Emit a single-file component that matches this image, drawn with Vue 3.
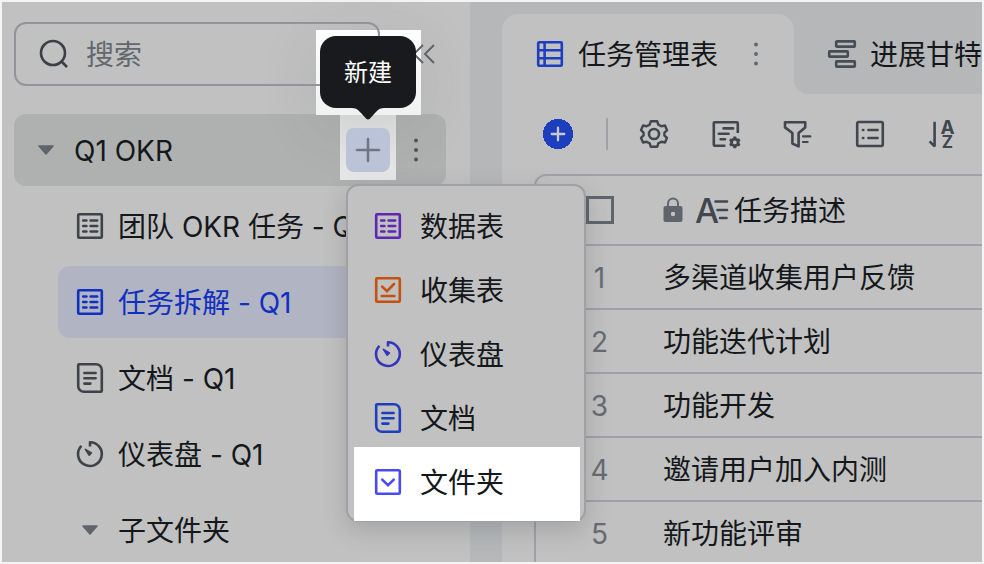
<script setup>
import { ref } from 'vue';

const keyword = ref('');
const activeNode = ref('tasks');
const menuOpen = ref(true);

const nodes = [
  { id: 'okr', icon: 'icon-table', label: '团队 OKR 任务 - Q1' },
  { id: 'tasks', icon: 'icon-table', label: '任务拆解 - Q1' },
  { id: 'doc', icon: 'icon-doc', label: '文档 - Q1' },
  { id: 'dashboard', icon: 'icon-dashboard', label: '仪表盘 - Q1' },
  { id: 'folder', icon: 'icon-caret', label: '子文件夹' },
];

const menuItems = [
  { icon: 'icon-table', label: '数据表', tone: 'purple' },
  { icon: 'icon-form', label: '收集表', tone: 'orange' },
  { icon: 'icon-dashboard', label: '仪表盘', tone: 'indigo' },
  { icon: 'icon-doc', label: '文档', tone: 'blue' },
  { icon: 'icon-folder', label: '文件夹', tone: 'bright', spotlight: true },
];

const tools = [
  { icon: 'icon-gear', label: '设置' },
  { icon: 'icon-fields', label: '字段配置' },
  { icon: 'icon-filter', label: '筛选' },
  { icon: 'icon-group', label: '分组' },
  { icon: 'icon-sort', label: '排序' },
];

const rows = [
  '多渠道收集用户反馈',
  '功能迭代计划',
  '功能开发',
  '邀请用户加入内测',
  '新功能评审',
];
</script>

<template>
  <div class="app">
    <svg class="sprite" aria-hidden="true">
      <symbol id="icon-search" viewBox="0 0 28 28">
        <circle cx="13" cy="13" r="12" />
        <path d="M21.5 21.5L27 27" />
      </symbol>
      <symbol id="icon-collapse" viewBox="0 0 28 28">
        <path d="M14 5L5 14l9 9M25 5l-9 9 9 9" stroke-width="2" />
      </symbol>
      <symbol id="icon-caret" viewBox="0 0 28 28">
        <path d="M7 10h14l-7 8z" fill="#5f656d" stroke="#5f656d" stroke-width="1.6" stroke-linejoin="round" />
      </symbol>
      <symbol id="icon-more" viewBox="0 0 28 28">
        <g fill="currentColor" stroke="none">
          <circle cx="14" cy="4.4" r="2" />
          <circle cx="14" cy="14" r="2" />
          <circle cx="14" cy="23.6" r="2" />
        </g>
      </symbol>
      <symbol id="icon-plus" viewBox="0 0 28 28">
        <path d="M14 3v22M3 14h22" stroke-linecap="round" />
      </symbol>
      <symbol id="icon-table" viewBox="0 0 28 28">
        <rect x="2.2" y="2.2" width="23.6" height="23.6" rx="1" />
        <path d="M7.2 8.5h3.2M14.6 8.5h6.6M7.2 14h3.2M14.6 14h6.6M7.2 19.5h3.2M14.6 19.5h6.6" stroke-linecap="round" />
      </symbol>
      <symbol id="icon-doc" viewBox="0 0 28 28">
        <path d="M3.2 .2H20a5.8 5.8 0 0 1 5.8 5.8v20.8a1 1 0 0 1-1 1H8a5.8 5.8 0 0 1-5.8-5.8V1.2a1 1 0 0 1 1-1z" />
        <path d="M8.4 9h11.2M8.4 14.3h11.2M8.4 19.6h6" stroke-linecap="round" />
      </symbol>
      <symbol id="icon-dashboard" viewBox="0 0 28 28">
        <path d="M14 6.6V2.2A11.9 11.9 0 1 1 5.4 5.8" stroke-linejoin="round" />
        <path d="M9.4 9.4l6 3.6-2.2 2.2z" fill="currentColor" stroke-width="1.6" stroke-linejoin="round" />
      </symbol>
      <symbol id="icon-form" viewBox="0 0 28 28">
        <rect x="2.2" y="2.2" width="23.6" height="23.6" rx="1" />
        <path d="M8.2 10.6l4.8 4.6 7-7.2M7.8 20h12.6" stroke-linecap="round" />
      </symbol>
      <symbol id="icon-folder" viewBox="0 0 28 28">
        <rect x="2.2" y="2.2" width="23.6" height="23.6" rx="1" />
        <path d="M8.2 11.6l5.8 5.6 5.8-5.6" stroke-linecap="round" />
      </symbol>
      <symbol id="icon-grid" viewBox="0 0 28 28">
        <rect x="2.2" y="2.2" width="23.6" height="23.6" rx="1" />
        <path d="M8.6 2v24M2 10.2h24M2 18.2h24" />
      </symbol>
      <symbol id="icon-gantt" viewBox="0 0 28 28">
        <rect x="8.2" y="1.4" width="18.6" height="5.2" rx=".5" />
        <rect x="1.2" y="11.4" width="18.6" height="5.2" rx=".5" />
        <rect x="8.2" y="21.4" width="18.6" height="5.2" rx=".5" />
      </symbol>
      <symbol id="icon-gear" viewBox="0 0 28 28">
        <path d="M10.8 1.2H17.2L18.3 4.6 21.4 6.2 25 5.5 27 10.3 24.4 12.7V15.5L27 17.8 25 22.5 21.4 21.8 18.3 23.4 17.2 26.8H10.8L9.7 23.4 6.6 21.8 3 22.5 1 17.8 3.6 15.3V12.7L1 10.2 3 5.5 6.6 6.2 9.7 4.6z" stroke-linejoin="round" stroke-width="2.4" />
        <circle cx="14" cy="14" r="5" />
      </symbol>
      <symbol id="icon-fields" viewBox="0 0 28 28">
        <path d="M25.8 13V3.2a1 1 0 0 0-1-1H2.8a1 1 0 0 0-1 1v21.6a1 1 0 0 0 1 1H13.4" />
        <path d="M11.5 8.4h9.6M6.8 13.8h9.8M8.6 19.2h4.4" stroke-linecap="round" />
        <circle cx="22.8" cy="22.4" r="3.3" stroke-width="2.8" />
        <path d="M22.8 16.6v2.2M22.8 26v2.2M17.8 19.5l1.9 1.1M25.9 24.2l1.9 1.1M17.8 25.3l1.9-1.1M25.900 20.6l1.9-1.1" stroke-width="3" />
      </symbol>
      <symbol id="icon-filter" viewBox="0 0 28 28">
        <path d="M1 2.2H21.2V7.4L14.6 13V26.4L8.4 23.6V13L1 7.4z" stroke-linejoin="round" />
        <path d="M19 16.4h7.4M19 22h4.6" stroke-linecap="round" stroke-width="2.2" />
      </symbol>
      <symbol id="icon-group" viewBox="0 0 28 28">
        <rect x="1.2" y="2" width="25.6" height="24" rx="1.4" />
        <path d="M12.4 10h9.2M12.4 18h9.2M6.9 10h.4M6.9 18h.4" stroke-linecap="round" />
      </symbol>
      <symbol id="icon-sort" viewBox="0 0 28 28">
        <path d="M6.6 1.8V26.4L1.6 21.4" stroke-linejoin="bevel" />
        <text class="sprite__letter" x="19.5" y="13.5" font-size="19">A</text>
        <text class="sprite__letter" x="19.5" y="28" font-size="17">Z</text>
      </symbol>
      <symbol id="icon-lock" viewBox="0 0 20 28">
        <rect x=".5" y="10" width="19" height="16" rx="2" fill="currentColor" stroke="none" />
        <path d="M5 11V7.6a5 5 0 0 1 10 0V11" stroke-width="2" />
        <circle cx="10" cy="18" r="2.2" fill="#c1c1c1" stroke="none" />
      </symbol>
      <symbol id="icon-text" viewBox="0 0 32 28">
        <text class="sprite__thin" x="11" y="26.5" font-size="34">A</text>
        <path d="M19.5 5.5H31M21.5 14H31M24 22h6.5" stroke-linecap="round" />
      </symbol>
    </svg>

    <aside class="sidebar">
      <div class="sidebar__header">
        <label class="search">
          <svg class="icon search__icon"><use href="#icon-search" /></svg>
          <input v-model="keyword" class="search__input" type="text" placeholder="搜索" aria-label="搜索" />
        </label>
        <button class="collapse" type="button" aria-label="收起">
          <svg class="icon"><use href="#icon-collapse" /></svg>
        </button>
      </div>

      <nav class="tree">
        <div class="tree__root">
          <svg class="icon"><use href="#icon-caret" /></svg>
          <span class="tree__title">Q1 OKR</span>
          <div class="create">
            <button class="create__button" type="button" aria-label="新建" @click="menuOpen = !menuOpen">
              <svg class="icon"><use href="#icon-plus" /></svg>
            </button>
            <div class="tooltip" role="tooltip">
              新建
              <svg class="tooltip__arrow" viewBox="0 0 32 12">
                <path d="M0 0h32c-5 0-7 3-9 5l-5 5.400q-2 2-4 0L9 5C7 3 5 0 0 0z" />
              </svg>
            </div>
            <ul v-if="menuOpen" class="menu">
              <li v-for="item in menuItems" :key="item.label">
                <button
                  class="menu__item"
                  :class="['menu__item--' + item.tone, { 'menu__item--spotlight': item.spotlight }]"
                  type="button"
                >
                  <svg class="icon"><use :href="'#' + item.icon" /></svg>
                  <span class="menu__label">{{ item.label }}</span>
                </button>
              </li>
            </ul>
          </div>
          <button class="more" type="button" aria-label="更多">
            <svg class="icon"><use href="#icon-more" /></svg>
          </button>
        </div>

        <a
          v-for="node in nodes"
          :key="node.id"
          class="tree__node"
          :class="{ 'tree__node--active': node.id === activeNode }"
          href="#"
          @click.prevent="activeNode = node.id"
        >
          <svg class="icon"><use :href="'#' + node.icon" /></svg>
          <span class="tree__label">{{ node.label }}</span>
        </a>
      </nav>
    </aside>

    <main class="main">
      <div class="tabs">
        <div class="tab tab--active">
          <svg class="icon"><use href="#icon-grid" /></svg>
          <span class="tab__label">任务管理表</span>
          <button class="more tab__more" type="button" aria-label="更多">
            <svg class="icon"><use href="#icon-more" /></svg>
          </button>
        </div>
        <div class="tab">
          <svg class="icon"><use href="#icon-gantt" /></svg>
          <span class="tab__label">进展甘特图</span>
        </div>
      </div>

      <section class="panel">
        <div class="toolbar">
          <button class="toolbar__add" type="button" aria-label="添加记录">
            <svg class="icon"><use href="#icon-plus" /></svg>
          </button>
          <span class="toolbar__divider"></span>
          <div class="toolbar__tools">
            <button v-for="tool in tools" :key="tool.icon" class="toolbar__tool" type="button" :aria-label="tool.label">
              <svg class="icon"><use :href="'#' + tool.icon" /></svg>
            </button>
          </div>
        </div>

        <div class="sheet">
          <table class="table">
            <thead>
              <tr>
                <th class="table__index"><input class="checkbox" type="checkbox" aria-label="全选" /></th>
                <th>
                  <div class="field">
                    <svg class="field__lock"><use href="#icon-lock" /></svg>
                    <svg class="field__type"><use href="#icon-text" /></svg>
                    <span class="field__name">任务描述</span>
                  </div>
                </th>
              </tr>
            </thead>
            <tbody>
              <tr v-for="(row, index) in rows" :key="row">
                <td class="table__index">{{ index + 1 }}</td>
                <td>{{ row }}</td>
              </tr>
            </tbody>
          </table>
        </div>
      </section>
    </main>
  </div>
</template>

<style>
body {
  margin: 0;
  background-color: #f4f4f4;
}
</style>

<style scoped>
.app {
  display: flex;
  box-sizing: border-box;
  height: 100vh;
  padding: 2px;
  overflow: hidden;
  background-color: #b5b7b9;
  background-clip: content-box;
  font-family: Inter, "Noto Sans CJK SC", sans-serif;
  font-size: 28px;
  line-height: 40px;
  color: #15181b;
}

button {
  display: flex;
  align-items: center;
  justify-content: center;
  padding: 0;
  border: 0;
  background: none;
  font: inherit;
  color: inherit;
}

.sprite {
  display: none;
}

.sprite__letter {
  font-family: Inter, sans-serif;
  font-weight: 700;
  text-anchor: middle;
  fill: currentColor;
  stroke: none;
}

.sprite__thin {
  font-family: Inter, sans-serif;
  font-weight: 500;
  text-anchor: middle;
  fill: currentColor;
  stroke: none;
}

svg,
symbol {
  overflow: visible;
}

svg {
  fill: none;
  stroke: currentColor;
  stroke-width: 2.6;
}

.icon {
  flex: none;
  width: 28px;
  height: 28px;
}

.tree__title,
.tree__label,
.menu__label,
.tab__label,
.field__name {
  padding-top: 2px;
}

/* sidebar */
.sidebar {
  position: relative;
  z-index: 1;
  flex: none;
  box-sizing: border-box;
  width: 468px;
  padding: 20px 24px 0 12px;
  background-color: #c1c1c1;
}

.sidebar__header {
  position: relative;
  z-index: 1;
  display: flex;
  gap: 20px;
  margin-bottom: 28px;
}

.search {
  display: flex;
  flex: 1;
  align-items: center;
  gap: 18px;
  box-sizing: border-box;
  height: 64px;
  min-width: 0;
  padding-left: 24px;
  border: 2px solid #939399;
  border-radius: 12px;
}

.search__icon {
  color: #3a4047;
}

.search__input {
  flex: 1;
  min-width: 0;
  padding: 2px 0 0;
  border: 0;
  outline: 0;
  background: none;
  font: inherit;
  color: inherit;
}

.search__input::placeholder {
  color: #62686f;
  opacity: 1;
}

.collapse {
  width: 46px;
  color: #5f656d;
}

.tree {
  display: flex;
  flex-direction: column;
  gap: 4px;
}

.tree__root,
.tree__node {
  display: flex;
  align-items: center;
  gap: 14px;
  height: 72px;
  padding-left: 18px;
  border-radius: 12px;
}

.tree__root {
  padding-right: 18px;
  background-color: #afb1b0;
}

.tree__title {
  flex: 1;
}

.tree__node {
  margin-left: 44px;
  overflow: hidden;
  white-space: nowrap;
  text-decoration: none;
  color: #3d4349;
}

.tree__label {
  color: #15181b;
}

.tree__node--active,
.tree__node--active .tree__label {
  color: #1030bf;
}

.tree__node--active {
  background-color: #b1b4c2;
}

.more {
  width: 24px;
  color: #50565d;
}

/* create button with its tooltip and menu */
.create {
  position: relative;
}

.create::before,
.create::after {
  content: "";
  position: absolute;
}

.create::before {
  top: -13px;
  right: -6px;
  bottom: -8px;
  left: -6px;
  background: linear-gradient(#dddfde, #e6e9e7);
}

.create::after {
  top: -98px;
  left: -30px;
  width: 105px;
  height: 85px;
  background: linear-gradient(#fdfdfd, #f1f1f1);
  box-shadow: 0 12px 60px rgba(60, 65, 70, 0.1);
}

.create__button {
  position: relative;
  z-index: 1;
  width: 44px;
  height: 44px;
  border-radius: 8px;
  background-color: #bac3d8;
  color: #72777f;
}

.tooltip {
  position: absolute;
  z-index: 2;
  bottom: 64px;
  left: -26px;
  width: 96px;
  height: 72px;
  border-radius: 16px;
  background-color: #191a1e;
  font-size: 24px;
  line-height: 74px;
  text-align: center;
  color: #ffffff;
}

.tooltip__arrow {
  position: absolute;
  top: 100%;
  left: 32px;
  width: 32px;
  height: 12px;
  fill: #191a1e;
  stroke: none;
}

.menu {
  position: absolute;
  z-index: 2;
  top: 56px;
  left: 0;
  box-sizing: border-box;
  width: 240px;
  margin: 0;
  padding: 8px 4px 6px 6px;
  border: 2px solid #a0a0a6;
  border-radius: 12px;
  background-color: #c1c1c1;
  box-shadow: 0 8px 24px rgba(60, 65, 70, 0.22);
  list-style: none;
}

.menu__item {
  position: relative;
  justify-content: flex-start;
  gap: 18px;
  width: 100%;
  height: 64px;
  padding-left: 20px;
}

.menu__label {
  color: #15181b;
}

.menu__item--purple {
  color: #5e26b5;
}

.menu__item--orange {
  color: #c4520f;
}

.menu__item--indigo {
  color: #3535bd;
}

.menu__item--blue {
  color: #1c3fc0;
}

.menu__item--bright {
  color: #4a4af5;
}

.menu__item--spotlight {
  z-index: 0;
}

.menu__item--spotlight::before {
  content: "";
  position: absolute;
  z-index: -1;
  top: -3px;
  right: 0;
  bottom: -7px;
  left: 0;
  background-color: #ffffff;
}

/* main area */
.main {
  display: flex;
  flex: 1;
  flex-direction: column;
  min-width: 0;
  margin-left: 32px;
  overflow: hidden;
}

.tabs {
  display: flex;
  flex: none;
  margin-top: 12px;
}

.tab {
  display: flex;
  flex: none;
  align-items: center;
  gap: 14px;
  height: 80px;
  padding: 0 26px 0 34px;
  white-space: nowrap;
}

.tab > .icon {
  color: #474d54;
}

.tab--active {
  position: relative;
  border-radius: 16px 16px 0 0;
  background-color: #c1c1c1;
}

.tab--active::after {
  content: "";
  position: absolute;
  bottom: 0;
  left: 100%;
  width: 14px;
  height: 14px;
  background: radial-gradient(circle at top right, transparent 14px, #c1c1c1 14px);
}

.tab--active > .icon {
  color: #1e3fbd;
}

.tab__more {
  margin-left: 12px;
  color: #62686f;
}

.panel {
  flex: 1;
  min-height: 0;
  padding-left: 32px;
  background-color: #c1c1c1;
}

.toolbar {
  display: flex;
  align-items: center;
  gap: 32px;
  height: 80px;
  padding-left: 8px;
}

.toolbar__add {
  width: 32px;
  height: 30px;
  background: radial-gradient(circle, #1e3fbd 15px, transparent 15px);
  color: #c9cbd2;
}

.toolbar__add .icon {
  width: 16px;
  height: 16px;
  stroke-width: 4;
}

.toolbar__divider {
  width: 2px;
  height: 32px;
  background-color: #a0a1a5;
}

.toolbar__tools {
  display: flex;
  gap: 44px;
}

.toolbar__tool {
  color: #41474e;
}

.sheet {
  border: 2px solid #a0a0a6;
  border-right: 0;
  border-bottom: 0;
  border-radius: 12px 0 0 0;
}

.table {
  width: 100%;
  border-spacing: 0;
  table-layout: fixed;
}

.table th,
.table td {
  box-sizing: border-box;
  height: 64px;
  padding: 0;
  border-bottom: 2px solid #a0a0a6;
  font-weight: 400;
  text-align: left;
  white-space: nowrap;
}

.table td {
  padding-top: 2px;
}

.table th {
  height: 70px;
}

.table .table__index {
  width: 127px;
  text-align: center;
  color: #666b72;
}

.checkbox {
  display: block;
  box-sizing: border-box;
  width: 28px;
  height: 28px;
  margin: 0 auto;
  border: 3px solid #5f656d;
  appearance: none;
}

.field {
  display: flex;
  align-items: center;
}

.field__lock {
  width: 20px;
  height: 28px;
  margin-right: 13px;
  color: #5f656d;
}

.field__type {
  width: 32px;
  height: 28px;
  margin-right: 6px;
  color: #41474e;
}
</style>
